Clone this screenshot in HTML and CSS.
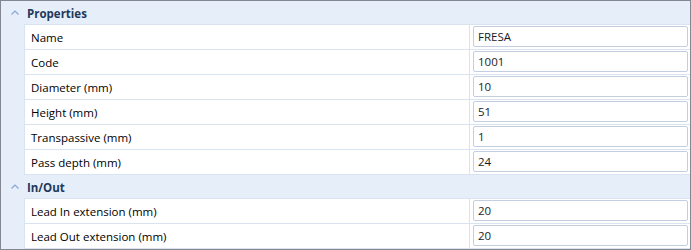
FILE: index.html
```html
<!DOCTYPE html>
<html>
	<head>
		<meta charset="UTF-8">
		<title>Properties</title>
		<link rel="stylesheet" href="styles.css">
	</head>
	<body>
		<div class="grid">
			<div class="section">
				<div class="section_head">
					<span class="chevron"><svg width="8" height="5" viewBox="0 0 8 5"><polyline points="0.5,4.5 4,1 7.5,4.5" fill="none" stroke="#88a6d6" stroke-width="1.2"/></svg></span>
					<span class="title">Properties</span>
				</div>
				<div class="rows">
					<div class="row"><div class="label">Name</div><div class="value"><div class="box">FRESA</div></div></div>
					<div class="row"><div class="label">Code</div><div class="value"><div class="box">1001</div></div></div>
					<div class="row"><div class="label">Diameter (mm)</div><div class="value"><div class="box">10</div></div></div>
					<div class="row"><div class="label">Height (mm)</div><div class="value"><div class="box">51</div></div></div>
					<div class="row"><div class="label">Transpassive (mm)</div><div class="value"><div class="box">1</div></div></div>
					<div class="row"><div class="label">Pass depth (mm)</div><div class="value"><div class="box">24</div></div></div>
				</div>
			</div>
			<div class="section">
				<div class="section_head">
					<span class="chevron"><svg width="8" height="5" viewBox="0 0 8 5"><polyline points="0.5,4.5 4,1 7.5,4.5" fill="none" stroke="#88a6d6" stroke-width="1.2"/></svg></span>
					<span class="title">In/Out</span>
				</div>
				<div class="rows">
					<div class="row"><div class="label">Lead In extension (mm)</div><div class="value"><div class="box">20</div></div></div>
					<div class="row"><div class="label">Lead Out extension (mm)</div><div class="value"><div class="box">20</div></div></div>
				</div>
			</div>
		</div>
	</body>
</html>
```

FILE: styles.css
```css
* {
	margin: 0;
	padding: 0;
	box-sizing: border-box;
}
body {
	font-family: "Segoe UI", "Open Sans", sans-serif;
	font-size: 11.5px;
	color: #000;
	background: #fff;
}
.grid {
	width: 691px;
	height: 250px;
	border: 1px solid #828790;
	background: #e6eef9;
}
.section_head {
	height: 23px;
	display: flex;
	align-items: center;
	padding-top: 1px;
}
.chevron {
	width: 26px;
	display: flex;
	justify-content: center;
	padding-left: 2px;
	margin-top: -2px;
}
.title {
	font-weight: bold;
	color: #1e395b;
	font-size: 11.5px;
}
.rows {
	margin-left: 23px;
	border-bottom: 1px solid #dae3f0;
}
.row {
	height: 25px;
	display: flex;
	background: #fff;
	border-top: 1px solid #dae3f0;
	border-left: 1px solid #dae3f0;
}
.label {
	width: 445px;
	padding-left: 6px;
	padding-top: 1px;
	line-height: 24px;
	border-right: 1px solid #dae3f0;
}
.value {
	flex: 1;
	padding: 1px 2px 2px 3px;
}
.box {
	height: 21px;
	border: 1px solid #c3cee0;
	border-radius: 2px;
	padding-left: 4px;
	line-height: 20px;
	color: #1b1b1b;
}
```
